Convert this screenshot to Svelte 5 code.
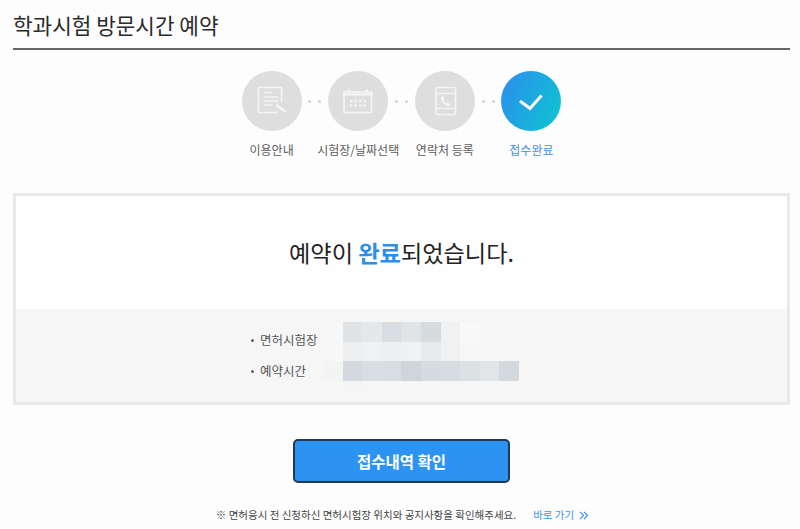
<script>
  const blur1 = [
    ['#f7f7f7','#dfe3e6','#e5e8ea','#d8dde1','#e0e4e7','#d5dbdf','#eff1f2','#f8f8f8'],
    ['#f7f7f7','#edeff0','#eff1f2','#edeff0','#eff1f2','#e6eaec','#f0f1f2','#f7f7f7']
  ];
  const blur2 = ['#f3f4f4','#d3d9de','#d9dee2','#d8dde1','#cfd6da','#d5dbdf','#d7dce0','#dce1e4','#e2e5e8','#d3d9dd'];
  const blur3 = ['#f7f7f7','#f4f5f5','#f6f6f6','#f6f6f6','#f6f6f6','#f7f7f7','#f6f6f6','#f7f7f7','#f7f7f7','#f7f7f7'];
</script>

<main class="page">
  <h1>학과시험 방문시간 예약</h1>

  <ol class="steps">
    <li class="step">
      <span class="circle">
        <svg width="34" height="34" viewBox="0 0 34 34" fill="none" stroke="#f4f4f4" stroke-width="1.6">
          <path d="M26.500 18V3.500h-23v25h19"/>
          <path d="M9.500 8.500h8M8.500 13h15M8.500 17h15M8.500 21h9" stroke-width="1.500"/>
          <path d="M21 21l10 7" stroke-width="2.600"/>
        </svg>
      </span>
      <span class="label">이용안내</span>
    </li>
    <li class="dots"><i></i><i></i></li>
    <li class="step">
      <span class="circle">
        <svg width="34" height="34" viewBox="0 0 34 34" fill="none" stroke="#f4f4f4" stroke-width="1.6">
          <rect x="3" y="8" width="27.500" height="20.500"/>
          <path d="M2 10.500h30" stroke-width="2.400"/>
          <path d="M8 5.500v4M26 5.500v4" stroke-width="2"/>
          <path d="M9 17h2.400M13.500 17h2.400M18 17h2.400M22.500 17h2.400M9 21.500h2.400M13.500 21.500h2.400M18 21.500h2.400M22.500 21.500h2.400" stroke-width="2.400"/>
        </svg>
      </span>
      <span class="label">시험장/날짜선택</span>
    </li>
    <li class="dots"><i></i><i></i></li>
    <li class="step">
      <span class="circle">
        <svg width="34" height="34" viewBox="0 0 34 34" fill="none" stroke="#f4f4f4" stroke-width="1.6">
          <rect x="8" y="3.500" width="19.500" height="27" rx="1.500"/>
          <path d="M8 9.500h19.500M8 24.500h19.500"/>
          <path d="M13 13c0 5 3 8.500 8 9.500l1.500-2.500-3-1.500-1 1c-1.500-.7-2.500-2-3-3.500l1-1-1-3z" fill="#f4f4f4" stroke="none"/>
        </svg>
      </span>
      <span class="label">연락처 등록</span>
    </li>
    <li class="dots"><i></i><i></i></li>
    <li class="step current">
      <span class="circle">
        <svg width="26" height="26" viewBox="0 0 26 26" fill="none" stroke="#fff" stroke-width="3">
          <path d="M2 13l10 7.500L23.500 7.500"/>
        </svg>
      </span>
      <span class="label">접수완료</span>
    </li>
  </ol>

  <section class="panel">
    <h2>예약이 <strong>완료</strong>되었습니다.</h2>
    <div class="details">
      <dl>
        <div class="row first">
          <dt>면허시험장</dt>
          <dd>
            {#each blur1 as line}
              <div class="mline">{#each line as c}<b style:background={c}></b>{/each}</div>
            {/each}
          </dd>
        </div>
        <div class="row">
          <dt>예약시간</dt>
          <dd>
            <div class="mline">{#each blur2 as c}<b style:background={c}></b>{/each}</div>
            <div class="mline thin">{#each blur3 as c}<b style:background={c}></b>{/each}</div>
          </dd>
        </div>
      </dl>
    </div>
  </section>

  <button type="button" class="confirm">접수내역 확인</button>

  <p class="notice">
    <span>※ 면허응시 전 신청하신 면허시험장 위치와 공지사항을 확인해주세요.</span>
    <a href="#top">바로 가기
      <svg width="10" height="9" viewBox="0 0 10 9" fill="none" stroke="#3d94e6" stroke-width="1.200">
        <path d="M1 .8l3.500 3.700L1 8.200M5 .8l3.500 3.700L5 8.200"/>
      </svg>
    </a>
  </p>
</main>

<style>
  :global(body) { margin: 0; background: #fdfdfd; }
  .page {
    width: 800px; height: 529px; box-sizing: border-box; overflow: hidden;
    padding: 0 10px 0 13px;
    font-family: "Noto Sans CJK KR", "Noto Sans", sans-serif;
    color: #333;
    display: flex; flex-direction: column;
  }
  h1 {
    margin: 0; height: 50px; box-sizing: border-box;
    padding-top: 10px;
    font-size: 21.300px; font-weight: 400; line-height: 30px; color: #2a2a2a;
    border-bottom: 2px solid #666;
  }
  .steps {
    list-style: none; margin: 21px 0 0; padding: 0;
    display: flex; justify-content: center; align-items: flex-start;
  }
  .step { width: 60px; display: flex; flex-direction: column; align-items: center; }
  .circle {
    width: 60px; height: 60px; border-radius: 50%; background: #dedede;
    display: flex; align-items: center; justify-content: center;
  }
  .current .circle { background: linear-gradient(115deg, #2a92ea 10%, #10c0d4 90%); }
  .label {
    margin-top: 9px; font-size: 12px; line-height: 20px; color: #5c5c5c; white-space: nowrap;
  }
  .current .label { color: #3d94e0; }
  .dots { width: 26.600px; height: 60px; display: flex; align-items: center; justify-content: center; gap: 7px; }
  .dots i { width: 3px; height: 3px; border-radius: 50%; background: #d4d4d4; }
  .panel {
    margin-top: 33px; height: 212px; box-sizing: border-box;
    border: 3px solid #e9e9e9; background: #fefefe;
    display: flex; flex-direction: column;
  }
  h2 {
    margin: 0; height: 113px; box-sizing: border-box; padding-top: 39px;
    text-align: center; font-size: 23.200px; font-weight: 400; line-height: 34px; color: #222;
  }
  h2 strong { color: #2a8fe8; font-weight: 700; }
  .details { flex: 1; background: #f6f6f6; padding: 13px 0 0 229px; }
  dl { margin: 0; }
  .row { display: flex; }
  dt {
    width: 78px; box-sizing: border-box; padding-left: 15px;
    font-size: 12.500px; line-height: 20px; color: #555;
    position: relative;
  }
  .first dt { padding-top: 8px; }
  dt::before {
    content: ""; position: absolute; left: 6px; top: 9px; width: 3px; height: 3px; border-radius: 50%; background: #666;
  }
  .first dt::before { top: 17px; }
  dd { margin: 0; }
  .mline { display: flex; height: 19.500px; }
  .mline.thin { height: 11px; }
  .mline b { width: 19.600px; display: block; }
  .confirm {
    align-self: center; margin: 34px 0 0; width: 217px; height: 44px;
    background: #2d93f2; color: #fff; border: 2px solid #1f3a57; border-radius: 5px;
    font: 700 15.500px "Noto Sans CJK KR", sans-serif;
  }
  .notice {
    margin: 24px 0 0; display: flex; justify-content: center; gap: 17px;
    font-size: 10.500px; line-height: 16px; color: #444;
    position: relative; left: 1px;
  }
  .notice a { color: #3d94e6; text-decoration: none; display: flex; align-items: center; gap: 5px; }
</style>
